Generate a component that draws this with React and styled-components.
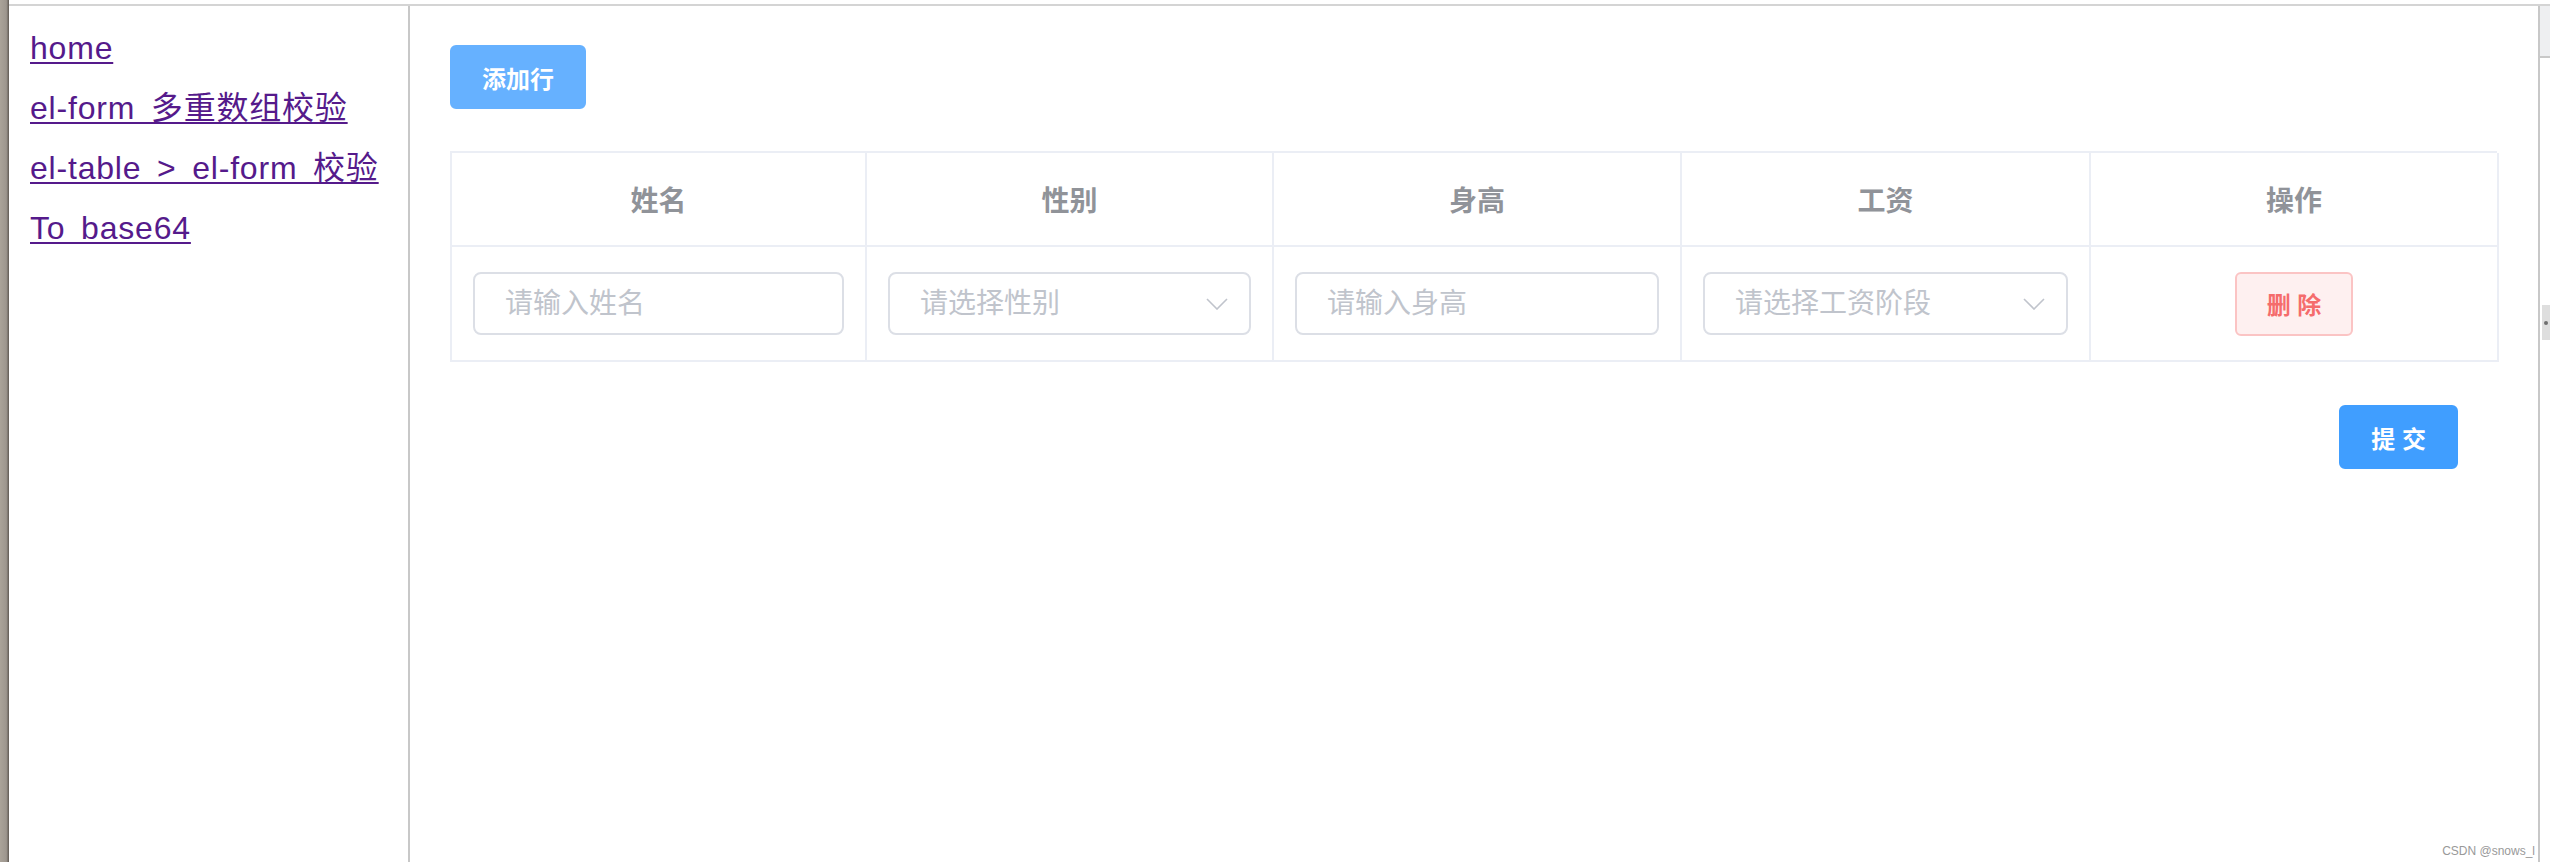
import React from "react"
import styled, { createGlobalStyle } from "styled-components"

const GlobalStyle = createGlobalStyle`
  html, body {
    margin: 0;
    padding: 0;
    background: #fff;
  }
  body {
    font-family: "Liberation Sans", "Noto Sans CJK SC", sans-serif;
  }
  * {
    box-sizing: border-box;
  }
`

const Screen = styled.div`
  display: flex;
  width: 2550px;
  height: 862px;
  overflow: hidden;
  position: relative;
`

const DesktopEdge = styled.div`
  width: 9px;
  flex-shrink: 0;
  background: linear-gradient(to right, #aaa399, #9d968e 70%, #5f5953);
`

const Frame = styled.div`
  flex: 1;
  display: flex;
  flex-direction: column;
  padding-top: 4px;
  background: #fff;
`

const FrameBody = styled.div`
  flex: 1;
  display: flex;
  border-top: 2px solid #d4d4d4;
`

const Sidebar = styled.nav`
  width: 401px;
  flex-shrink: 0;
  padding: 12px 0 0 21px;
  border-right: 2px solid #c8c8c8;
  display: flex;
  flex-direction: column;
  align-items: flex-start;
`

const NavLink = styled.a`
  display: block;
  font-size: 32px;
  line-height: 60px;
  letter-spacing: 0.8px;
  word-spacing: 6px;
  color: #551a8b;
  text-decoration: underline;
  text-decoration-thickness: 2px;
  text-underline-offset: 3px;
  white-space: nowrap;
`

const Content = styled.main`
  width: 2130px;
  flex-shrink: 0;
  padding: 39px 41px 0 40px;
  border-right: 2px solid #c8c8c8;
  display: flex;
  flex-direction: column;
  align-items: flex-start;
`

const Gutter = styled.div`
  flex: 1;
  display: flex;
  flex-direction: column;
  background: #fff;
`

const GutterHead = styled.div`
  height: 52px;
  background: #eeeff1;
  border-bottom: 2px solid #c8c8c8;
`

const GutterGrip = styled.div`
  margin-top: 247px;
  height: 35px;
  margin-left: 2px;
  background: #dedede;
  display: flex;
  align-items: center;
  padding-left: 2px;
  &::before {
    content: "";
    width: 4px;
    height: 4px;
    border-radius: 50%;
    background: #6f6f6f;
  }
`

const Button = styled.button`
  height: 64px;
  padding: 0 30px;
  border-radius: 6px;
  border: 2px solid ${(p) => p.$border};
  background: ${(p) => p.$bg};
  color: ${(p) => p.$color};
  font-family: "Liberation Sans", "Noto Sans CJK SC", sans-serif;
  font-size: 24px;
  font-weight: 600;
  cursor: pointer;
  white-space: pre;
`

const Table = styled.div`
  margin-top: 42px;
  width: 2047px;
  display: grid;
  grid-template-columns: 415px 407px 408px 409px 408px;
  border-top: 2px solid #ebeef5;
  border-left: 2px solid #ebeef5;
`

const HeadCell = styled.div`
  height: 94px;
  display: flex;
  align-items: center;
  justify-content: center;
  border-right: 2px solid #ebeef5;
  border-bottom: 2px solid #ebeef5;
  color: #909399;
  font-size: 28px;
  font-weight: 700;
`

const BodyCell = styled.div`
  height: 115px;
  display: flex;
  align-items: center;
  justify-content: ${(p) => (p.$center ? "center" : "stretch")};
  padding: 0 21px;
  border-right: 2px solid #ebeef5;
  border-bottom: 2px solid #ebeef5;
`

const Field = styled.div`
  position: relative;
  width: 100%;
`

const Input = styled.input`
  width: 100%;
  height: 63px;
  padding: 0 ${(p) => (p.$select ? "64px" : "30px")} 0 30px;
  border: 2px solid #dcdfe6;
  border-radius: 8px;
  background: #fff;
  font-family: "Liberation Sans", "Noto Sans CJK SC", sans-serif;
  font-size: 28px;
  color: #606266;
  outline: none;
  &::placeholder {
    color: #c0c4cc;
  }
`

const Arrow = styled.svg`
  position: absolute;
  right: 23px;
  top: 50%;
  margin-top: -6px;
  width: 22px;
  height: 12px;
`

const Footer = styled.div`
  align-self: stretch;
  display: flex;
  justify-content: flex-end;
  padding-right: 39px;
  margin-top: 43px;
`

const Watermark = styled.div`
  position: absolute;
  right: 15px;
  bottom: 4px;
  font-family: "Liberation Sans", sans-serif;
  font-size: 12px;
  color: #999;
`

const links = ["home", "el-form 多重数组校验", "el-table > el-form 校验", "To base64"]

const columns = ["姓名", "性别", "身高", "工资", "操作"]

const TextField = ({ placeholder, select }) => (
  <Field>
    <Input placeholder={placeholder} readOnly={select} $select={select} />
    {select && (
      <Arrow viewBox="0 0 22 12">
        <path d="M1 1 L11 11 L21 1" fill="none" stroke="#c0c4cc" strokeWidth="1.6" />
      </Arrow>
    )}
  </Field>
)

const App = () => {
  return (
    <Screen>
      <GlobalStyle />
      <DesktopEdge />
      <Frame>
        <FrameBody>
          <Sidebar>
            {links.map((l) => (
              <NavLink key={l} href="#">
                {l}
              </NavLink>
            ))}
          </Sidebar>
          <Content>
            <Button $bg="#66b1ff" $border="#66b1ff" $color="#fff">
              添加行
            </Button>
            <Table>
              {columns.map((c) => (
                <HeadCell key={c}>{c}</HeadCell>
              ))}
              <BodyCell>
                <TextField placeholder="请输入姓名" />
              </BodyCell>
              <BodyCell>
                <TextField placeholder="请选择性别" select />
              </BodyCell>
              <BodyCell>
                <TextField placeholder="请输入身高" />
              </BodyCell>
              <BodyCell>
                <TextField placeholder="请选择工资阶段" select />
              </BodyCell>
              <BodyCell $center>
                <Button $bg="#fef0f0" $border="#fbc4c4" $color="#f56c6c">
                  删 除
                </Button>
              </BodyCell>
            </Table>
            <Footer>
              <Button $bg="#409eff" $border="#409eff" $color="#fff">
                提 交
              </Button>
            </Footer>
          </Content>
          <Gutter>
            <GutterHead />
            <GutterGrip />
          </Gutter>
        </FrameBody>
      </Frame>
      <Watermark>CSDN @snows_l</Watermark>
    </Screen>
  )
}

export default App
